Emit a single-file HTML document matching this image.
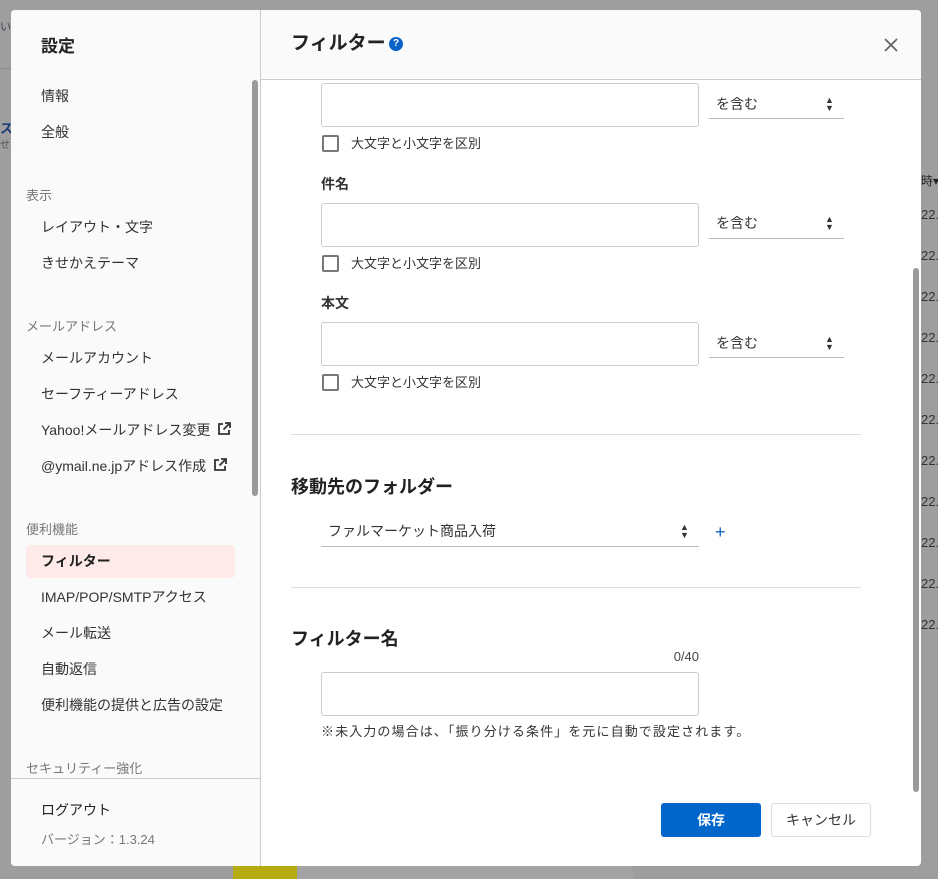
<!DOCTYPE html>
<html><head><meta charset="utf-8"><style>
*{margin:0;padding:0;box-sizing:border-box}
body{width:938px;height:879px;overflow:hidden;background:#9e9e9e;font-family:"Liberation Sans","Noto Sans CJK JP",sans-serif;color:#333;position:relative}
.a{position:absolute;white-space:nowrap}
.t{line-height:20px;transform:translateY(-10px)}
#modal{position:absolute;left:11px;top:10px;width:910px;height:856px;background:#fff;border-radius:4px;overflow:hidden}
#side{position:absolute;left:0;top:0;width:250px;height:856px;background:#fafafa;border-right:1px solid #ccc}
.it{font-size:14px;color:#333}
.sec{font-size:13px;color:#777}
.inp{position:absolute;border:1px solid #ccc;border-radius:3px;background:#fff}
.sel{position:absolute;border-bottom:1px solid #bbb}
.cb{position:absolute;width:17px;height:17px;border:2px solid #777;border-radius:2px}
.lbl{font-size:13px;color:#333}
.arr{position:absolute;font-size:9px;line-height:8px;color:#333}
</style></head><body>
<div class="a" style="left:0;top:18px;font-size:11px;color:#445">い</div>
<div class="a" style="left:0;top:68px;width:11px;border-top:1px solid #888"></div>
<div class="a" style="left:0;top:118px;font-size:13px;font-weight:bold;color:#1a3c7a">ス</div>
<div class="a" style="left:0;top:136px;font-size:10px;color:#555">せの</div>
<div class="a" style="left:921px;top:172px;font-size:12px;color:#222">時▾</div>
<div class="a" style="left:921px;top:194px;font-size:13px;color:#333;line-height:41px">22.<br>22.<br>22.<br>22.<br>22.<br>22.<br>22.<br>22.<br>22.<br>22.<br>22.</div>
<div class="a" style="left:233px;top:866px;width:400px;height:13px;background:#b5aa10"></div>
<div class="a" style="left:297px;top:866px;width:336px;height:13px;background:#a3a3a3"></div>

<div id="modal">
 <div id="side">
  <div class="a t" style="left:30px;top:37px;font-size:17px;font-weight:bold;color:#222">設定</div>
  <div class="a t it" style="left:30px;top:86px">情報</div>
  <div class="a t it" style="left:30px;top:122px">全般</div>
  <div class="a t sec" style="left:15px;top:186px">表示</div>
  <div class="a t it" style="left:30px;top:217px">レイアウト・文字</div>
  <div class="a t it" style="left:30px;top:253px">きせかえテーマ</div>
  <div class="a t sec" style="left:15px;top:317px">メールアドレス</div>
  <div class="a t it" style="left:30px;top:348px">メールアカウント</div>
  <div class="a t it" style="left:30px;top:384px">セーフティーアドレス</div>
  <div class="a t it" style="left:30px;top:420px">Yahoo!メールアドレス変更 <svg width="14" height="14" viewBox="0 0 14 14" style="vertical-align:-1px;margin-left:3px"><path d="M6 2H2v10h10V8" fill="none" stroke="#333" stroke-width="1.8"/><path d="M8 1h5v5M13 1L6.5 7.5" fill="none" stroke="#333" stroke-width="1.8"/></svg></div>
  <div class="a t it" style="left:30px;top:456px">@ymail.ne.jpアドレス作成 <svg width="14" height="14" viewBox="0 0 14 14" style="vertical-align:-1px;margin-left:3px"><path d="M6 2H2v10h10V8" fill="none" stroke="#333" stroke-width="1.8"/><path d="M8 1h5v5M13 1L6.5 7.5" fill="none" stroke="#333" stroke-width="1.8"/></svg></div>
  <div class="a t sec" style="left:15px;top:520px">便利機能</div>
  <div class="a" style="left:15px;top:535px;width:209px;height:33px;background:#ffeaea;border-radius:4px"></div>
  <div class="a t it" style="left:30px;top:551px;font-weight:bold;color:#222">フィルター</div>
  <div class="a t it" style="left:30px;top:587px">IMAP/POP/SMTPアクセス</div>
  <div class="a t it" style="left:30px;top:623px">メール転送</div>
  <div class="a t it" style="left:30px;top:659px">自動返信</div>
  <div class="a t it" style="left:30px;top:695px">便利機能の提供と広告の設定</div>
  <div class="a t sec" style="left:15px;top:759px">セキュリティー強化</div>
  <div class="a" style="left:0;top:768px;width:249px;height:88px;background:#fafafa;border-top:1px solid #ccc"></div>
  <div class="a t it" style="left:30px;top:800px;color:#222">ログアウト</div>
  <div class="a t sec" style="left:30px;top:830px;color:#777">バージョン：1.3.24</div>
  <div class="a" style="left:241px;top:70px;width:6px;height:416px;background:#9a9a9a;border-radius:3px"></div>
 </div>
 <div class="a" style="left:250px;top:0;width:660px;height:70px;background:#fafafa;border-bottom:1px solid #ccc"></div>
 <div class="a t" style="left:280px;top:34px;font-size:19px;font-weight:bold;color:#222">フィルター</div>
 <div class="a" style="left:378px;top:27px;width:14px;height:14px;border-radius:7px;background:#0a64c8;color:#fff;font-size:10px;font-weight:bold;text-align:center;line-height:14px">?</div>
 <svg class="a" style="left:873px;top:28px" width="14" height="14" viewBox="0 0 14 14"><path d="M1 1l12 12M13 1L1 13" stroke="#666" stroke-width="1.8"/></svg>

 <div class="inp" style="left:310px;top:73px;width:378px;height:44px"></div>
 <div class="sel" style="left:698px;top:80px;width:135px;height:29px"></div>
 <div class="a t lbl" style="left:705px;top:94px;font-size:14px">を含む</div>
 <div class="arr" style="left:814px;top:86px">▲<br>▼</div>
 <div class="cb" style="left:311px;top:125px"></div>
 <div class="a t lbl" style="left:340px;top:134px">大文字と小文字を区別</div>

 <div class="a t" style="left:310px;top:174px;font-size:14px;font-weight:bold;color:#333">件名</div>
 <div class="inp" style="left:310px;top:193px;width:378px;height:44px"></div>
 <div class="sel" style="left:698px;top:200px;width:135px;height:29px"></div>
 <div class="a t lbl" style="left:705px;top:213px;font-size:14px">を含む</div>
 <div class="arr" style="left:814px;top:205px">▲<br>▼</div>
 <div class="cb" style="left:311px;top:245px"></div>
 <div class="a t lbl" style="left:340px;top:254px">大文字と小文字を区別</div>

 <div class="a t" style="left:310px;top:293px;font-size:14px;font-weight:bold;color:#333">本文</div>
 <div class="inp" style="left:310px;top:312px;width:378px;height:44px"></div>
 <div class="sel" style="left:698px;top:319px;width:135px;height:29px"></div>
 <div class="a t lbl" style="left:705px;top:333px;font-size:14px">を含む</div>
 <div class="arr" style="left:814px;top:325px">▲<br>▼</div>
 <div class="cb" style="left:311px;top:364px"></div>
 <div class="a t lbl" style="left:340px;top:373px">大文字と小文字を区別</div>

 <div class="a" style="left:280px;top:424px;width:570px;border-top:1px solid #ddd"></div>
 <div class="a t" style="left:280px;top:477px;font-size:18px;font-weight:bold;color:#222">移動先のフォルダー</div>
 <div class="sel" style="left:310px;top:507px;width:378px;height:30px"></div>
 <div class="a t lbl" style="left:317px;top:521px;font-size:14px">ファルマーケット商品入荷</div>
 <div class="arr" style="left:669px;top:513px">▲<br>▼</div>
 <div class="a t" style="left:704px;top:522px;font-size:18px;color:#0a64c8">+</div>
 <div class="a" style="left:280px;top:577px;width:570px;border-top:1px solid #ddd"></div>

 <div class="a t" style="left:280px;top:629px;font-size:18px;font-weight:bold;color:#222">フィルター名</div>
 <div class="a t" style="left:640px;top:647px;width:48px;text-align:right;font-size:13px;color:#444">0/40</div>
 <div class="inp" style="left:310px;top:662px;width:378px;height:44px"></div>
 <div class="a t lbl" style="left:310px;top:722px;font-size:13px;letter-spacing:1.1px">※未入力の場合は、「振り分ける条件」を元に自動で設定されます。</div>

 <div class="a" style="left:902px;top:258px;width:6px;height:524px;background:#9a9a9a;border-radius:3px"></div>

 <div class="a" style="left:650px;top:793px;width:100px;height:34px;background:#0066cc;border-radius:3px;color:#fff;font-size:14px;font-weight:bold;text-align:center;line-height:34px">保存</div>
 <div class="a" style="left:760px;top:793px;width:100px;height:34px;background:#fff;border:1px solid #ddd;border-radius:3px;color:#333;font-size:14px;text-align:center;line-height:32px">キャンセル</div>
</div>
</body></html>
